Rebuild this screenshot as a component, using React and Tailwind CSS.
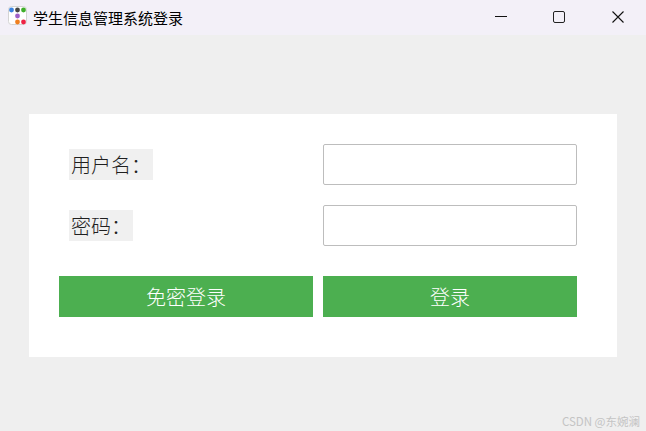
export default function App() {
  const font = { fontFamily: '"Noto Sans CJK SC", "Liberation Sans", sans-serif' };
  return (
    <div className="relative flex h-[431px] w-[646px] flex-col overflow-hidden bg-[#efefef]" style={font}>
      <div className="flex h-[35px] items-center justify-between bg-[#f3f0f8]">
        <div className="flex items-center">
          <svg className="mb-[4px] ml-[8px]" width="19" height="19" viewBox="0 0 19 19">
            <rect x="0.5" y="0.5" width="18" height="18" rx="3" fill="#fff" stroke="#d4d4d4" />
            <circle cx="3.5" cy="4" r="2.4" fill="#3b82e0" />
            <circle cx="9.5" cy="4" r="2.4" fill="#444" />
            <circle cx="15.5" cy="4" r="2.4" fill="#3fae2a" />
            <circle cx="9.5" cy="10" r="2.4" fill="#a060c8" />
            <circle cx="9.5" cy="16" r="2.4" fill="#f08020" />
            <circle cx="15.5" cy="16" r="2.4" fill="#ee2244" />
          </svg>
          <span className="ml-[6px] text-[15px] leading-none text-black">学生信息管理系统登录</span>
        </div>
        <div className="flex items-center pb-[2px]">
          <svg width="12" height="12" viewBox="0 0 12 12" className="mr-[46px]"><path d="M0 5.5H12" stroke="#111" strokeWidth="1" /></svg>
          <svg width="12" height="12" viewBox="0 0 12 12" className="mr-[47px]"><rect x="0.5" y="0.5" width="11" height="11" rx="1.5" fill="none" stroke="#222" strokeWidth="1" /></svg>
          <svg width="12" height="12" viewBox="0 0 12 12" className="mr-[22px]"><path d="M0.5 0.5L11.5 11.5M11.5 0.5L0.5 11.5" stroke="#111" strokeWidth="1.1" /></svg>
        </div>
      </div>
      <div className="mx-[29px] mt-[79px] h-[243px] bg-white px-[30px] pt-[30px]">
        <div className="grid grid-cols-[254px_254px] gap-x-[10px] gap-y-[20px]">
          <div className="flex h-[41px] items-center pl-[10px]">
            <span className="flex h-[31px] w-[84px] items-center bg-[#f0f0f0] pl-[2px] text-[20px] font-light leading-none text-[#1f1f1f]">用户名：</span>
          </div>
          <div className="h-[41px] rounded-[2px] border border-[#bdbdbd] bg-white" />
          <div className="flex h-[41px] items-center pl-[10px]">
            <span className="flex h-[31px] w-[64px] items-center bg-[#f0f0f0] pl-[2px] text-[20px] font-light leading-none text-[#1f1f1f]">密码：</span>
          </div>
          <div className="h-[41px] rounded-[2px] border border-[#bdbdbd] bg-white" />
          <div className="mt-[10px] flex h-[41px] items-center justify-center bg-[#4caf50] text-[20px] font-light text-white">免密登录</div>
          <div className="mt-[10px] flex h-[41px] items-center justify-center bg-[#4caf50] text-[20px] font-light text-white">登录</div>
        </div>
      </div>
      <div className="absolute bottom-[4px] right-[6px] text-[11.5px] leading-none text-[#c4c4c4]">CSDN @东婉澜</div>
    </div>
  );
}
